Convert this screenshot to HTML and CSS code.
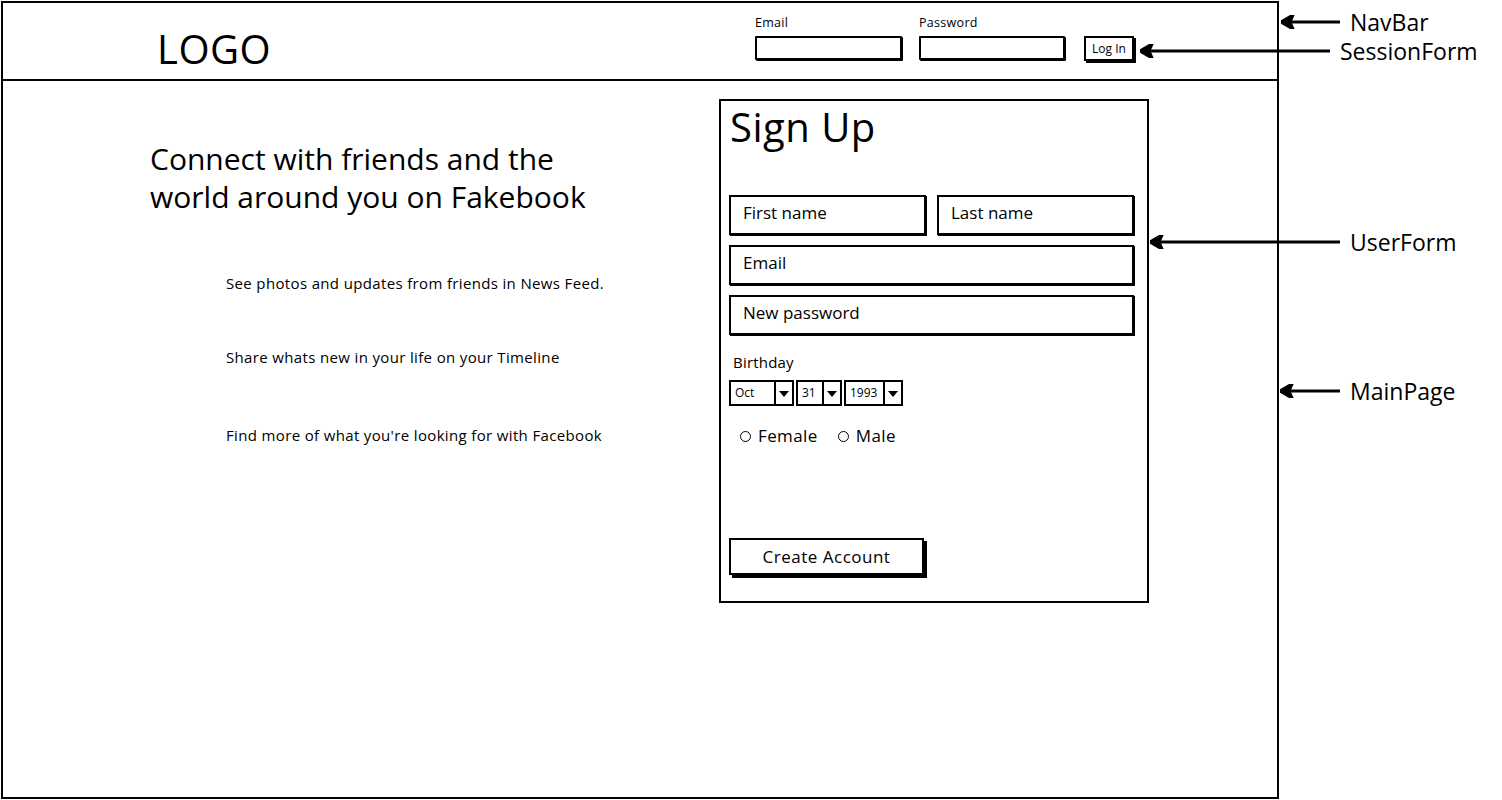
FILE: index.html
```html
<!DOCTYPE html>
<html>
<head>
    <title>Fakebook - Sign Up</title>
    <link rel="stylesheet" href="styles.css">
</head>
<body>
    <div class="page">
        <header class="navbar">
            <div class="logo">LOGO</div>
            <form class="session-form">
                <label class="session-field">
                    <span>Email</span>
                    <input type="email" name="email">
                </label>
                <label class="session-field">
                    <span>Password</span>
                    <input type="password" name="password">
                </label>
                <button type="submit" class="login-btn">Log In</button>
            </form>
        </header>

        <main class="main">
            <section class="intro">
                <h1>Connect with friends and the<br>world around you on Fakebook</h1>
                <ul class="features">
                    <li>See photos and updates from friends in News Feed.</li>
                    <li>Share whats new in your life on your Timeline</li>
                    <li>Find more of what you're looking for with Facebook</li>
                </ul>
            </section>

            <form class="signup">
                <h2>Sign Up</h2>
                <div class="name-row">
                    <input type="text" placeholder="First name">
                    <input type="text" placeholder="Last name">
                </div>
                <input type="email" placeholder="Email">
                <input type="password" placeholder="New password">

                <div class="birthday">
                    <span class="birthday-label">Birthday</span>
                    <div class="combos">
                        <div class="combo combo-month"><span>Oct</span><span class="combo-arrow"></span></div>
                        <div class="combo combo-day"><span>31</span><span class="combo-arrow"></span></div>
                        <div class="combo combo-year"><span>1993</span><span class="combo-arrow"></span></div>
                    </div>
                </div>

                <div class="genders">
                    <label class="radio"><span class="radio-dot"></span>Female</label>
                    <label class="radio"><span class="radio-dot"></span>Male</label>
                </div>

                <button type="submit" class="create-btn">Create Account</button>
            </form>
        </main>
    </div>

    <!-- component callouts -->
    <div class="note note-navbar">
        <svg class="arrow" viewBox="0 0 59 14"><polygon points="0,7 12,0 9,7 12,14"/><line x1="8" y1="7" x2="59" y2="7"/></svg>
        <span>NavBar</span>
    </div>
    <div class="note note-session">
        <svg class="arrow" viewBox="0 0 190 14"><polygon points="0,7 12,0 9,7 12,14"/><line x1="8" y1="7" x2="190" y2="7"/></svg>
        <span>SessionForm</span>
    </div>
    <div class="note note-user">
        <svg class="arrow" viewBox="0 0 190 14"><polygon points="0,7 12,0 9,7 12,14"/><line x1="8" y1="7" x2="190" y2="7"/></svg>
        <span>UserForm</span>
    </div>
    <div class="note note-main">
        <svg class="arrow" viewBox="0 0 60 14"><polygon points="0,7 12,0 9,7 12,14"/><line x1="8" y1="7" x2="60" y2="7"/></svg>
        <span>MainPage</span>
    </div>
</body>
</html>
```

FILE: styles.css
```css
* {
    box-sizing: border-box;
}

body {
    font-family: "Open Sans", Arial, sans-serif;
    color: #000;
    background-color: #fff;
    margin: 0;
    width: 1502px;
    height: 800px;
    position: relative;
    overflow: hidden;
}

input,
button {
    font-family: inherit;
    color: #000;
}

.page {
    margin: 1px 0 0 1px;
    width: 1278px;
    height: 798px;
    border: 2px solid #000;
}

/* top bar */
.navbar {
    height: 78px;
    border-bottom: 2px solid #000;
    display: flex;
    align-items: flex-start;
}

.logo {
    margin: 24px 0 0 154px;
    font-size: 40px;
    line-height: 44px;
    letter-spacing: 0.5px;
}

.session-form {
    margin: 12px 0 0 auto;
    margin-right: 143px;
    display: flex;
    align-items: flex-start;
}

.session-field {
    display: flex;
    flex-direction: column;
    margin-right: 17px;
}

.session-field span {
    font-size: 12.5px;
    letter-spacing: 0.3px;
    line-height: 16px;
    margin-bottom: 5px;
}

.session-field input {
    width: 147px;
    height: 24px;
    border: 2px solid #000;
    border-radius: 1px;
    box-shadow: 1px 1px 0 #000;
    padding: 0 4px;
}

.session-field + .session-field input {
    width: 146px;
}

.login-btn {
    margin: 21px 0 0 2px;
    width: 50px;
    height: 25px;
    border: 2px solid #000;
    background: #fff;
    box-shadow: 2px 2px 0 #000;
    font-size: 12px;
    padding: 0;
}

/* main page */
.main {
    display: flex;
    align-items: flex-start;
    padding-top: 18px;
}

.intro {
    width: 569px;
    margin-left: 147px;
}

.intro h1 {
    margin: 41px 0 0;
    font-size: 30px;
    font-weight: normal;
    line-height: 38px;
}

.features {
    list-style: none;
    margin: 0;
    padding: 0 0 0 76px;
}

.features li {
    font-size: 15px;
    letter-spacing: 0.35px;
    line-height: 20px;
}

.features li:nth-child(1) {
    margin-top: 57px;
}

.features li:nth-child(2) {
    margin-top: 54px;
}

.features li:nth-child(3) {
    margin-top: 58px;
}

/* sign up card */
.signup {
    width: 430px;
    height: 504px;
    border: 2px solid #000;
    padding: 3px 13px 0 8px;
    display: flex;
    flex-direction: column;
}

.signup h2 {
    margin: 0 0 0 1px;
    font-size: 40px;
    letter-spacing: 0.5px;
    font-weight: normal;
    line-height: 46px;
}

.signup input {
    height: 40px;
    border: 2px solid #000;
    box-shadow: 1px 1px 0 #000;
    padding: 0 12px 5px;
    font-size: 17px;
    margin-bottom: 10px;
}

.signup input::placeholder {
    color: #000;
}

.name-row {
    display: flex;
    gap: 11px;
    margin-top: 45px;
}

.name-row input {
    flex: 1;
    min-width: 0;
}

.birthday {
    margin-top: 7px;
}

.birthday-label {
    display: block;
    margin-left: 4px;
    font-size: 15px;
    letter-spacing: 0.2px;
    line-height: 20px;
}

.combos {
    display: flex;
    gap: 2px;
    margin-top: 8px;
}

.combo {
    display: flex;
    height: 26px;
    border: 2px solid #000;
    font-size: 12px;
}

.combo span:first-child {
    flex: 1;
    padding: 3px 0 0 4px;
    line-height: 16px;
}

.combo-arrow {
    width: 18px;
    border-left: 2px solid #000;
    position: relative;
}

.combo-arrow::after {
    content: "";
    position: absolute;
    left: 3px;
    top: 9px;
    border-left: 5px solid transparent;
    border-right: 5px solid transparent;
    border-top: 6px solid #000;
}

.combo-month {
    width: 65px;
}

.combo-day {
    width: 46px;
}

.combo-year {
    width: 59px;
}

.genders {
    display: flex;
    gap: 20px;
    margin: 19px 0 0 11px;
}

.radio {
    display: flex;
    align-items: center;
    font-size: 17px;
    letter-spacing: 0.4px;
    line-height: 22px;
}

.radio-dot {
    width: 11px;
    height: 11px;
    border: 1.5px solid #000;
    border-radius: 50%;
    margin-right: 7px;
}

.create-btn {
    margin-top: 91px;
    width: 195px;
    height: 37px;
    border: 2px solid #000;
    background: #fff;
    box-shadow: 3px 3px 0 #000;
    font-size: 17px;
    letter-spacing: 0.5px;
    padding: 0;
}

/* callouts to the right of the page */
.note {
    position: absolute;
    display: flex;
    align-items: center;
    height: 30px;
    font-size: 23px;
}

.note .arrow {
    height: 14px;
    margin-right: 10px;
    fill: #000;
    stroke: #000;
    stroke-width: 3;
}

.note-navbar {
    left: 1281px;
    top: 7px;
}

.note-navbar .arrow {
    width: 59px;
}

.note-session {
    left: 1140px;
    top: 36px;
}

.note-session .arrow {
    width: 190px;
}

.note-user {
    left: 1150px;
    top: 227px;
}

.note-user .arrow {
    width: 190px;
}

.note-main {
    left: 1280px;
    top: 376px;
}

.note-main .arrow {
    width: 60px;
}
```
